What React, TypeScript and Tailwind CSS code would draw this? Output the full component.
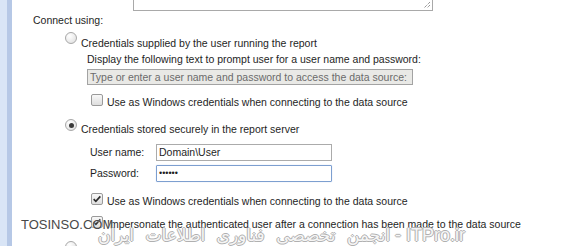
import React from "react";

const Radio: React.FC<{ checked?: boolean; className?: string }> = ({ checked, className = "" }) => (
  <span
    className={`flex h-[12px] w-[12px] shrink-0 items-center justify-center rounded-full border border-[#a8a8a8] bg-[radial-gradient(circle_at_35%_30%,#ffffff,#dcdcdc)] ${className}`}
  >
    {checked && <span className="h-[5px] w-[5px] rounded-full bg-[#3a3a3a]" />}
  </span>
);

const Checkbox: React.FC<{ checked?: boolean; className?: string }> = ({ checked, className = "" }) => (
  <span
    className={`flex h-[12px] w-[12px] shrink-0 items-center justify-center rounded-[2px] border border-[#9a9a9a] bg-[linear-gradient(#f8f8f8,#dedede)] ${className}`}
  >
    {checked && (
      <svg viewBox="0 0 12 12" className="h-[10px] w-[10px]">
        <path d="M2 6.2 L4.6 8.8 L10 2.8" fill="none" stroke="#2b2b2b" strokeWidth={2} />
      </svg>
    )}
  </span>
);

export default function App() {
  return (
    <div className="relative flex h-[246px] w-[575px] overflow-hidden bg-white font-['Liberation_Sans',Arial,sans-serif] text-[10.5px] leading-[13px] text-[#1e1e1e]">
      {/* side strip */}
      <div className="w-[7px] shrink-0 bg-[#d9e5f6]" />
      <div className="w-[5px] shrink-0 bg-[#b6c8e6]" />

      <div className="flex flex-1 flex-col">
        {/* textarea bottom */}
        <div className="relative ml-[121px] h-[11px] w-[300px] shrink-0 border-x border-b border-[#a9a9a9]">
          <svg viewBox="0 0 8 8" className="absolute bottom-[1px] right-[1px] h-[8px] w-[8px]">
            <path d="M7 1 L1 7 M7 4 L4 7" stroke="#6a6a6a" strokeWidth={1} strokeDasharray="1 1" />
          </svg>
        </div>

        <div className="ml-[21px] mt-[3px] shrink-0">Connect using:</div>

        <div className="mt-[5px] flex shrink-0 items-start">
          <Radio className="ml-[53px]" />
          <span className="ml-[4px] mt-[5px]">Credentials supplied by the user running the report</span>
        </div>

        <div className="ml-[75px] mt-[3px] shrink-0">Display the following text to prompt user for a user name and password:</div>

        <div className="ml-[75px] mt-[3px] flex h-[16px] w-[326px] shrink-0 items-center border border-[#a3a3a3] bg-[#e9e9e6] px-[2px] text-[#6b6b6b]">
          Type or enter a user name and password to access the data source:
        </div>

        <div className="mt-[9px] flex shrink-0 items-start">
          <Checkbox className="ml-[79px]" />
          <span className="ml-[4px] mt-[2px]">Use as Windows credentials when connecting to the data source</span>
        </div>

        <div className="mt-[10px] flex shrink-0 items-start">
          <Radio checked className="ml-[53px]" />
          <span className="ml-[4px] mt-[4px]">Credentials stored securely in the report server</span>
        </div>

        <div className="ml-[78px] mt-[8px] flex shrink-0 items-center">
          <span className="w-[66px]">User name:</span>
          <div className="flex h-[17px] w-[176px] items-center border border-[#ababab] px-[2px]">Domain\User</div>
        </div>

        <div className="ml-[78px] mt-[4px] flex shrink-0 items-center">
          <span className="w-[66px]">Password:</span>
          <div className="flex h-[17px] w-[176px] items-center rounded-[1px] border border-[#7d9fd0] px-[2px] text-[9px] shadow-[0_0_1px_#a9c3e8]">
            ••••••
          </div>
        </div>

        <div className="mt-[11px] flex shrink-0 items-start">
          <Checkbox checked className="ml-[79px]" />
          <span className="ml-[4px] mt-[2px]">Use as Windows credentials when connecting to the data source</span>
        </div>

        <div className="mt-[8px] flex shrink-0 items-start">
          <Checkbox checked className="ml-[79px]" />
          <span className="ml-[4px] mt-[2px]">Impersonate the authenticated user after a connection has been made to the data source</span>
        </div>

        <div className="mt-[10px] flex shrink-0">
          <Radio className="ml-[53px]" />
        </div>
      </div>

      {/* watermarks */}
      <div className="absolute left-[21px] top-[218px] font-['Liberation_Sans',Arial,sans-serif] text-[13px] leading-[14px] text-[#484848] [text-shadow:0_0_2px_#fff]">
        TOSINSO.COM
      </div>
      <div className="absolute left-[98px] top-[225px] flex items-center leading-[20px] text-[rgba(255,255,255,0.9)] [text-shadow:1px_0_#b0b0b0,-1px_0_#b0b0b0,0_1px_#b0b0b0,0_-1px_#b0b0b0]">
        <span dir="rtl" className="font-['DejaVu_Sans',sans-serif] text-[17px] [word-spacing:6px]">انجمن تخصصی فناوری اطلاعات ایران</span>
        <span className="font-['Liberation_Sans',Arial,sans-serif] text-[18px]">&nbsp;-&nbsp;ITPro.ir</span>
      </div>
    </div>
  );
}
